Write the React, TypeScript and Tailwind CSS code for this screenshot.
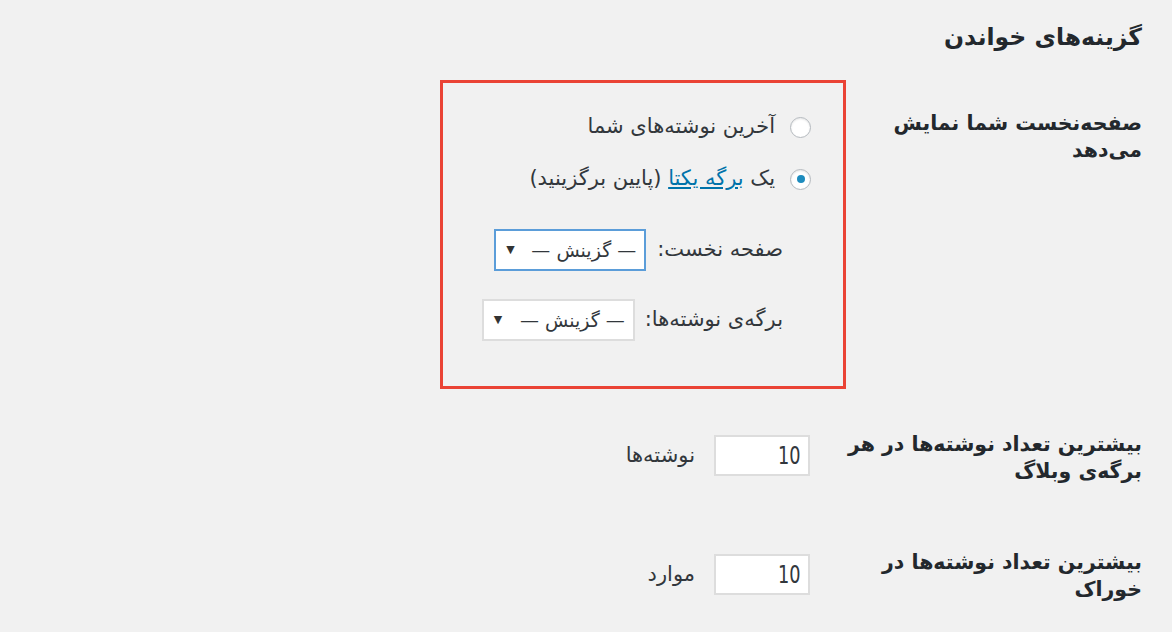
import React from "react";

function Radio({ checked }: { checked?: boolean }) {
  return (
    <span className="flex h-[21px] w-[21px] shrink-0 items-center justify-center rounded-full border border-[#b4b9be] bg-white shadow-[inset_0_1px_2px_rgba(0,0,0,0.1)]">
      {checked ? <span className="h-[8px] w-[8px] rounded-full bg-[#1e8cbe]" /> : null}
    </span>
  );
}

function Select({ focused, width }: { focused?: boolean; width: string }) {
  return (
    <div
      className={
        "flex h-[42px] items-center justify-between bg-white pr-[8px] pl-[10px] text-[19px] text-[#32373c] " +
        width +
        (focused ? " border-2 border-[#5b9dd9]" : " border-2 border-[#dddddd]")
      }
    >
      <span>— گزینش —</span>
      <span className="text-[11px] text-[#333]">▼</span>
    </div>
  );
}

function NumInput() {
  return (
    <div className="flex h-[41px] w-[96px] items-center justify-start border-2 border-[#dddddd] bg-white pr-[8px] font-['DejaVu_Sans_Condensed','DejaVu_Sans',sans-serif] text-[24px] text-[#32373c]">
      <span className="inline-block origin-right scale-x-[0.82]">10</span>
    </div>
  );
}

export default function App() {
  return (
    <div
      dir="rtl"
      className="h-[632px] w-full overflow-hidden bg-[#f1f1f1] pr-[30px] font-['DejaVu_Sans',sans-serif] text-[#23282d]"
    >
      <h1 className="mt-[19px] h-[36px] whitespace-nowrap text-[23.5px] font-bold leading-[36px]">گزینه‌های خواندن</h1>

      {/* Row 1 */}
      <div className="mt-[25px] flex">
        <div className="w-[296px] shrink-0 whitespace-nowrap pt-[30px] text-[20.5px] font-bold leading-[27px]">
          صفحه‌نخست شما نمایش
          <br />
          می‌دهد
        </div>
        <div className="flex h-[309px] w-[406px] flex-col border-[3px] border-[#ea4335] pt-[29px] pr-[32px] text-[21px] text-[#32373c]">
          <div className="flex h-[30px] items-center gap-[15px] whitespace-nowrap">
            <Radio />
            <span>آخرین نوشته‌های شما</span>
          </div>
          <div className="mt-[22px] flex h-[30px] items-center gap-[15px] whitespace-nowrap">
            <Radio checked />
            <span>
              یک <span className="text-[#0073aa] underline">برگه یکتا</span> (پایین برگزینید)
            </span>
          </div>
          <div className="mt-[35px] flex items-center gap-[11px] whitespace-nowrap pr-[28px]">
            <span>صفحه نخست:</span>
            <Select focused width="w-[152px]" />
          </div>
          <div className="mt-[28px] flex items-center gap-[10px] whitespace-nowrap pr-[28px]">
            <span>برگه‌ی نوشته‌ها:</span>
            <Select width="w-[153px]" />
          </div>
        </div>
      </div>

      {/* Row 2 */}
      <div className="mt-[42px] flex">
        <div className="w-[296px] shrink-0 whitespace-nowrap text-[20.5px] font-bold leading-[27px]">
          بیشترین تعداد نوشته‌ها در هر
          <br />
          برگه‌ی وبلاگ
        </div>
        <div className="flex items-start gap-[19px] pr-[36px] pt-[4px] text-[21px] text-[#32373c]">
          <NumInput />
          <span className="leading-[41px]">نوشته‌ها</span>
        </div>
      </div>

      {/* Row 3 */}
      <div className="mt-[64px] flex">
        <div className="w-[296px] shrink-0 whitespace-nowrap text-[20.5px] font-bold leading-[27px]">
          بیشترین تعداد نوشته‌ها در
          <br />
          خوراک
        </div>
        <div className="flex items-start gap-[19px] pr-[36px] pt-[5px] text-[21px] text-[#32373c]">
          <NumInput />
          <span className="leading-[41px]">موارد</span>
        </div>
      </div>
    </div>
  );
}
